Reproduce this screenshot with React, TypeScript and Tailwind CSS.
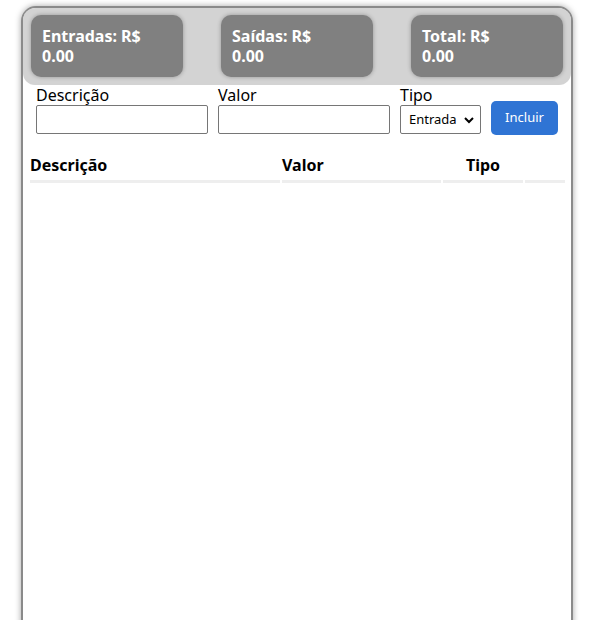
import React from "react";

export default function App() {
  const cards = ["Entradas", "Saídas", "Total"];
  return (
    <div className="w-[597px] h-[620px] overflow-hidden bg-white" style={{ fontFamily: '"Noto Sans", "Open Sans", sans-serif' }}>
      <div className="ml-[21px] w-[552px] mt-[6px] h-[640px] border-2 border-[#8a8a8a] rounded-t-[15px] shadow-[0_0_6px_rgba(0,0,0,0.35)] bg-white">
        <div className="bg-[#d3d3d3] rounded-[12px] h-[77px] px-[8px] pt-[7px] flex justify-between">
          {cards.map((c) => (
            <div key={c} className="w-[152px] h-[62px] bg-[#808080] rounded-[10px] shadow-[0_0_4px_rgba(0,0,0,0.3)] px-[11px] pt-[11px] text-white font-bold text-[16px] leading-[20px]">
              <div>{c}: R$</div>
              <div>0.00</div>
            </div>
          ))}
        </div>
        <div className="flex items-end pl-[13px] pt-[1px] gap-[10px]">
          <div className="flex flex-col">
            <label className="text-[16px] leading-[19px] text-black">Descrição</label>
            <input className="w-[172px] h-[29px] border border-[#767676] rounded-[2px]" />
          </div>
          <div className="flex flex-col">
            <label className="text-[16px] leading-[19px] text-black">Valor</label>
            <input className="w-[172px] h-[29px] border border-[#767676] rounded-[2px]" />
          </div>
          <div className="flex flex-col">
            <label className="text-[16px] leading-[19px] text-black">Tipo</label>
            <div className="relative w-[81px] h-[29px] border border-[#767676] rounded-[2px] flex items-center pl-[8px] text-[13px] text-black">
              Entrada
              <svg className="absolute right-[6px] top-[11px]" width="10" height="7" viewBox="0 0 10 7">
                <path d="M1 1 L5 5 L9 1" stroke="black" strokeWidth="2" fill="none" />
              </svg>
            </div>
          </div>
          <button className="w-[67px] h-[34px] bg-[#2f74d4] rounded-[5px] text-white text-[13px] mb-[-1px]">Incluir</button>
        </div>
        <table className="mt-[17px] ml-[5px] w-[539px] border-separate border-spacing-[2px]">
          <thead>
            <tr className="text-[16px] font-bold text-black">
              <th className="w-[250px] text-left h-[28px] border-b-[3px] border-[#eeeeee] pb-[3px]">Descrição</th>
              <th className="w-[159px] text-left border-b-[3px] border-[#eeeeee] pb-[3px]">Valor</th>
              <th className="w-[80px] text-center border-b-[3px] border-[#eeeeee] pb-[3px]">Tipo</th>
              <th className="w-[40px] border-b-[3px] border-[#eeeeee]"></th>
            </tr>
          </thead>
        </table>
      </div>
    </div>
  );
}
